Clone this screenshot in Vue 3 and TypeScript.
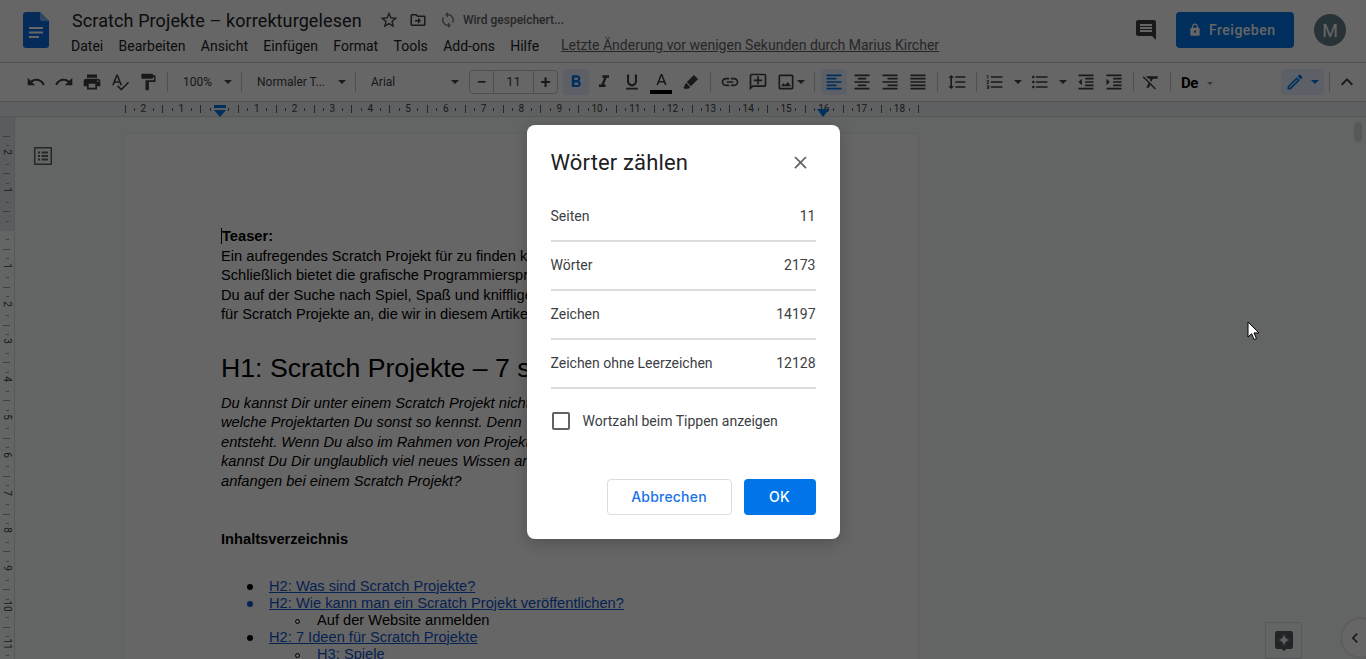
<script setup lang="ts">
interface ToolItem {
    kind: 'icon' | 'sep' | 'arrow' | 'select' | 'size' | 'style';
    d?: string;
    label?: string;
    width?: number;
    active?: boolean;
    // small nudge to the left edge, the real toolbar is not evenly spaced
    ml?: number;
}

const icons = {
    undo: 'M12.5 8c-2.65 0-5.05.99-6.9 2.6L2 7v9h9l-3.62-3.62c1.39-1.16 3.16-1.88 5.12-1.88 3.54 0 6.55 2.31 7.6 5.5l2.37-.78C21.08 11.03 17.15 8 12.5 8z',
    redo: 'M18.4 10.6C16.55 8.99 14.15 8 11.5 8c-4.65 0-8.58 3.03-9.96 7.22L3.9 16c1.05-3.19 4.05-5.5 7.6-5.5 1.95 0 3.73.72 5.12 1.88L13 16h9V7l-3.6 3.6z',
    print: 'M19 8H5c-1.66 0-3 1.34-3 3v6h4v4h12v-4h4v-6c0-1.66-1.34-3-3-3zm-3 11H8v-5h8v5zm3-7c-.55 0-1-.45-1-1s.45-1 1-1 1 .45 1 1-.45 1-1 1zm-1-9H6v4h12V3z',
    spell: 'M12.45 16h2.09L9.43 3H7.57L2.46 16h2.09l1.12-3h5.64l1.14 3zm-6.02-5L8.5 5.48 10.57 11H6.43zm15.16.59l-8.09 8.09L9.83 16l-1.41 1.41 5.09 5.09L23 13l-1.41-1.41z',
    paint: 'M18 4V3c0-.55-.45-1-1-1H5c-.55 0-1 .45-1 1v4c0 .55.45 1 1 1h12c.55 0 1-.45 1-1V6h1v4H9v11c0 .55.45 1 1 1h2c.55 0 1-.45 1-1v-9h8V4h-3z',
    bold: 'M15.6 10.79c.97-.67 1.65-1.77 1.65-2.79 0-2.26-1.75-4-4-4H7v14h7.04c2.09 0 3.71-1.7 3.71-3.79 0-1.52-.86-2.82-2.15-3.42zM10 6.5h3c.83 0 1.5.67 1.5 1.5s-.67 1.5-1.5 1.5h-3v-3zm3.5 9H10v-3h3.5c.83 0 1.5.67 1.5 1.5s-.67 1.5-1.5 1.5z',
    italic: 'M10 4v3h2.21l-3.42 8H6v3h8v-3h-2.21l3.42-8H18V4z',
    underline: 'M12 17c3.31 0 6-2.69 6-6V3h-2.5v8c0 1.93-1.57 3.5-3.5 3.5S8.5 12.93 8.5 11V3H6v8c0 3.31 2.69 6 6 6zm-7 2v2h14v-2H5z',
    marker: 'M15.5 3.5l5 5-8.5 8.5-5-5zM6 13l5 5-2 2H4l-1-1z',
    link: 'M3.9 12c0-1.71 1.39-3.1 3.1-3.1h4V7H7c-2.76 0-5 2.24-5 5s2.24 5 5 5h4v-1.9H7c-1.71 0-3.1-1.39-3.1-3.1zM8 13h8v-2H8v2zm9-6h-4v1.9h4c1.71 0 3.1 1.39 3.1 3.1s-1.39 3.1-3.1 3.1h-4V17h4c2.76 0 5-2.24 5-5s-2.24-5-5-5z',
    addComment: 'M20 2H4c-1.1 0-2 .9-2 2v18l4-4h14c1.1 0 2-.9 2-2V4c0-1.1-.9-2-2-2zm0 14H5.17L4 17.17V4h16v12zM11 5h2v4h4v2h-4v4h-2v-4H7V9h4V5z',
    image: 'M19 5v14H5V5h14m0-2H5c-1.1 0-2 .9-2 2v14c0 1.1.9 2 2 2h14c1.1 0 2-.9 2-2V5c0-1.1-.9-2-2-2zm-4.86 8.86l-3 3.87L9 13.14 6 17h12l-3.86-5.14z',
    left: 'M15 15H3v2h12v-2zm0-8H3v2h12V7zM3 13h18v-2H3v2zm0 8h18v-2H3v2zM3 3v2h18V3H3z',
    center: 'M7 15v2h10v-2H7zm-4 6h18v-2H3v2zm0-8h18v-2H3v2zm4-6v2h10V7H7zM3 3v2h18V3H3z',
    right: 'M3 21h18v-2H3v2zm6-4h12v-2H9v2zm-6-4h18v-2H3v2zm6-4h12V7H9v2zM3 3v2h18V3H3z',
    justify: 'M3 21h18v-2H3v2zm0-4h18v-2H3v2zm0-4h18v-2H3v2zm0-4h18V7H3v2zm0-6v2h18V3H3z',
    spacing: 'M6 7h2.5L5 3.5 1.5 7H4v10H1.5L5 20.5 8.5 17H6V7zm4-2v2h12V5H10zm0 14h12v-2H10v2zm0-6h12v-2H10v2z',
    numbered: 'M2 17h2v.5H3v1h1v.5H2v1h3v-4H2v1zm1-9h1V4H2v1h1v3zm-1 3h1.8L2 13.1v.9h3v-1H3.2L5 10.9V10H2v1zm5-6v2h14V5H7zm0 14h14v-2H7v2zm0-6h14v-2H7v2z',
    bullets: 'M4 10.5c-.83 0-1.5.67-1.5 1.5s.67 1.5 1.5 1.5 1.5-.67 1.5-1.5-.67-1.5-1.5-1.5zm0-6c-.83 0-1.5.67-1.5 1.5S3.17 7.5 4 7.5 5.5 6.83 5.5 6 4.83 4.5 4 4.5zm0 12c-.83 0-1.5.68-1.5 1.5s.68 1.5 1.5 1.5 1.5-.68 1.5-1.5-.67-1.5-1.5-1.5zM7 19h14v-2H7v2zm0-6h14v-2H7v2zm0-8v2h14V5H7z',
    outdent: 'M11 17h10v-2H11v2zm-8-5l4 4V8l-4 4zm0 9h18v-2H3v2zM3 3v2h18V3H3zm8 6h10V7H11v2zm0 4h10v-2H11v2z',
    indent: 'M3 21h18v-2H3v2zM3 8v8l4-4-4-4zm8 9h10v-2H11v2zM3 3v2h18V3H3zm8 6h10V7H11v2zm0 4h10v-2H11v2z',
    clear: 'M3.27 5L2 6.27l6.97 6.97L6.5 19h3l1.57-3.66L16.73 21 18 19.73 3.55 5.27 3.27 5zM6 5v.18L8.82 8h2.4l-.72 1.68 2.1 2.1L14.21 8H20V5H6z',
};

const pencil = 'M14.06 9.02l.92.92L5.92 19H5v-.92l9.06-9.06M17.66 3c-.25 0-.51.1-.7.29l-1.83 1.83 3.75 3.75 1.83-1.83c.39-.39.39-1.02 0-1.41l-2.34-2.34c-.2-.2-.45-.29-.71-.29zm-3.6 3.19L3 17.25V21h3.75L17.81 9.94l-3.75-3.75z';

const toolbar: ToolItem[] = [
    { kind: 'icon', d: icons.undo },
    { kind: 'icon', d: icons.redo },
    { kind: 'icon', d: icons.print },
    { kind: 'icon', d: icons.spell },
    { kind: 'icon', d: icons.paint },
    { kind: 'sep' },
    { kind: 'select', label: '100%', width: 63 },
    { kind: 'sep' },
    { kind: 'select', label: 'Normaler T...', width: 103 },
    { kind: 'sep' },
    { kind: 'select', label: 'Arial', width: 102 },
    { kind: 'size' },
    { kind: 'icon', d: icons.bold, active: true },
    { kind: 'icon', d: icons.italic },
    { kind: 'icon', d: icons.underline },
    { kind: 'style' },
    { kind: 'icon', d: icons.marker, ml: 1 },
    { kind: 'sep' },
    { kind: 'icon', d: icons.link },
    { kind: 'icon', d: icons.addComment },
    { kind: 'icon', d: icons.image },
    { kind: 'arrow', ml: -7, width: 16 },
    { kind: 'sep' },
    { kind: 'icon', d: icons.left, active: true },
    { kind: 'icon', d: icons.center },
    { kind: 'icon', d: icons.right },
    { kind: 'icon', d: icons.justify },
    { kind: 'sep' },
    { kind: 'icon', d: icons.spacing },
    { kind: 'sep' },
    { kind: 'icon', d: icons.numbered, ml: -1 },
    { kind: 'arrow', ml: 1.5 },
    { kind: 'icon', d: icons.bullets },
    { kind: 'arrow', ml: 2 },
    { kind: 'icon', d: icons.outdent, ml: 1.5 },
    { kind: 'icon', d: icons.indent },
    { kind: 'sep' },
    { kind: 'icon', d: icons.clear, ml: -2 },
    { kind: 'sep' },
];

const menus = ['Datei', 'Bearbeiten', 'Ansicht', 'Einfügen', 'Format', 'Tools', 'Add-ons', 'Hilfe'];

const stats = [
    { label: 'Seiten', value: '11' },
    { label: 'Wörter', value: '2173' },
    { label: 'Zeichen', value: '14197' },
    { label: 'Zeichen ohne Leerzeichen', value: '12128' },
];

const unit = 37.8;

// ruler marks sit every quarter unit, numbers on the whole units
const hMarks: { x: number; tall: boolean }[] = [];
const hNums: { x: number; n: number }[] = [];
for (let i = -10; i <= 74; i++) {
    const v = i / 4;
    const x = 219 + v * unit;
    if (i % 4 === 0) {
        if (i !== 0) hNums.push({ x, n: Math.abs(v) });
    } else {
        hMarks.push({ x, tall: i % 2 === 0 });
    }
}

const vMarks: { y: number; tall: boolean }[] = [];
const vNums: { y: number; n: number }[] = [];
for (let i = -10; i <= 46; i++) {
    const v = i / 4;
    const y = 113 + v * unit;
    if (i % 4 === 0) {
        if (i !== 0) vNums.push({ y, n: Math.abs(v) });
    } else {
        vMarks.push({ y, tall: i % 2 === 0 });
    }
}
</script>

<template>
    <div class="app">
        <header class="topbar">
            <svg class="logo" viewBox="0 0 26 36" width="26" height="36">
                <path d="M3 0h14l9 9v24a3 3 0 0 1-3 3H3a3 3 0 0 1-3-3V3a3 3 0 0 1 3-3z" fill="#0d6de0" />
                <path d="M17 0l9 9h-6.500a2.500 2.500 0 0 1-2.500-2.500z" fill="#7ab0f2" />
                <path d="M6 15h14v2H6zM6 19.500h14v2H6zM6 24h10v2H6z" fill="#fff" />
            </svg>
            <div class="title-block">
                <div class="title-row">
                    <span class="doc-title">Scratch Projekte – korrekturgelesen</span>
                    <svg class="ti star" viewBox="0 0 24 24"><path d="M22 9.240l-7.190-.620L12 2 9.190 8.630 2 9.240l5.460 4.730L5.820 21 12 17.270 18.180 21l-1.630-7.030L22 9.240zM12 15.400l-3.760 2.270 1-4.280-3.320-2.880 4.380-.380L12 6.100l1.710 4.040 4.380.380-3.320 2.880 1 4.280L12 15.400z" /></svg>
                    <svg class="ti folder" viewBox="0 0 24 24"><path d="M20 6h-8l-2-2H4c-1.100 0-2 .9-2 2v12c0 1.100.9 2 2 2h16c1.100 0 2-.9 2-2V8c0-1.100-.9-2-2-2zm0 12H4V6h5.170l2 2H20v10zm-8-1l4-4-4-4v3H8v2h4v3z" /></svg>
                    <svg class="ti sync" viewBox="0 0 24 24"><path d="M12 4V1L8 5l4 4V6c3.310 0 6 2.690 6 6 0 1.010-.25 1.970-.7 2.800l1.460 1.460C19.540 15.030 20 13.570 20 12c0-4.420-3.580-8-8-8zm0 14c-3.310 0-6-2.690-6-6 0-1.010.25-1.970.7-2.800L5.240 7.740C4.460 8.970 4 10.430 4 12c0 4.420 3.580 8 8 8v3l4-4-4-4v3z" /></svg>
                    <span class="saving">Wird gespeichert...</span>
                </div>
                <div class="menu-row">
                    <span v-for="m in menus" :key="m" class="menu-item">{{ m }}</span>
                    <a class="last-edit">Letzte Änderung vor wenigen Sekunden durch Marius Kircher</a>
                </div>
            </div>
            <div class="actions">
                <svg class="chat" viewBox="0 0 24 24" width="24" height="24"><path d="M21.990 4c0-1.100-.89-2-1.990-2H4c-1.100 0-2 .9-2 2v12c0 1.100.9 2 2 2h14l4 4-.01-18zM18 14H6v-2h12v2zm0-3H6V9h12v2zm0-3H6V6h12v2z" /></svg>
                <button class="share">
                    <svg viewBox="0 0 24 24" width="14" height="14"><path d="M18 8h-1V6c0-2.760-2.240-5-5-5S7 3.240 7 6v2H6c-1.100 0-2 .9-2 2v10c0 1.100.9 2 2 2h12c1.100 0 2-.9 2-2V10c0-1.100-.9-2-2-2zm-6 9c-1.100 0-2-.9-2-2s.9-2 2-2 2 .9 2 2-.9 2-2 2zm3.100-9H8.900V6c0-1.710 1.390-3.100 3.100-3.100 1.710 0 3.100 1.390 3.100 3.100v2z" /></svg>
                    Freigeben
                </button>
                <div class="avatar">M</div>
            </div>
        </header>

        <div class="toolbar">
            <template v-for="(item, i) in toolbar" :key="i">
                <span v-if="item.kind === 'sep'" class="sep"></span>
                <button v-else-if="item.kind === 'icon'" class="tool" :class="{ active: item.active }" :style="{ marginLeft: (item.ml ?? 0) + 'px' }">
                    <svg viewBox="0 0 24 24" width="20" height="20"><path :d="item.d" /></svg>
                </button>
                <span v-else-if="item.kind === 'arrow'" class="arrow-slot" :style="{ marginLeft: (item.ml ?? 0) + 'px', width: (item.width ?? 15) + 'px' }"><i class="arrow"></i></span>
                <div v-else-if="item.kind === 'select'" class="select" :style="{ width: item.width + 'px' }">
                    <span>{{ item.label }}</span><i class="arrow"></i>
                </div>
                <div v-else-if="item.kind === 'size'" class="size-box">
                    <span class="size-btn">−</span>
                    <span class="size-val">11</span>
                    <span class="size-btn">+</span>
                </div>
                <button v-else class="tool wide">
                    <span class="color-a">
                        <svg viewBox="0 0 24 20" width="19" height="16"><path d="M11 1L5.500 15h2.250l1.120-3h6.250l1.120 3h2.250L13 1h-2zm-1.380 9L12 3.670 14.380 10H9.620z" /></svg>
                        <i class="color-bar"></i>
                    </span>
                </button>
            </template>
            <div class="de"><b>De</b><i class="arrow small"></i></div>
            <div class="tool-right">
                <div class="mode">
                    <svg viewBox="0 0 24 24" width="20" height="20"><path :d="pencil" /></svg>
                    <i class="arrow blue"></i>
                </div>
                <span class="sep"></span>
                <svg class="collapse" viewBox="0 0 24 24" width="24" height="24"><path d="M7.410 15.410L12 10.830l4.590 4.580L18 14l-6-6-6 6z" /></svg>
            </div>
        </div>

        <div class="h-ruler">
            <i v-for="m in hMarks" :key="m.x" class="h-mark" :class="{ tall: m.tall }" :style="{ left: m.x + 'px' }"></i>
            <span v-for="n in hNums" :key="n.x" class="h-num" :style="{ left: n.x + 'px' }">{{ n.n }}</span>
            <svg class="indent-mark" viewBox="0 0 14 12" width="14" height="12"><path d="M1 0h12v3H1zM1 5h12l-6 7z" /></svg>
            <svg class="end-mark" viewBox="0 0 14 8" width="14" height="8"><path d="M1 0h12l-6 8z" /></svg>
        </div>

        <div class="workspace">
            <div class="v-ruler">
                <div class="v-margin"></div>
                <i v-for="m in vMarks" :key="m.y" class="v-mark" :class="{ tall: m.tall }" :style="{ top: m.y + 'px' }"></i>
                <span v-for="n in vNums" :key="n.y" class="v-num" :style="{ top: n.y + 'px' }">{{ n.n }}</span>
            </div>
            <svg class="outline" viewBox="0 0 18 18" width="18" height="18">
                <path d="M1 0h16a1 1 0 0 1 1 1v16a1 1 0 0 1-1 1H1a1 1 0 0 1-1-1V1a1 1 0 0 1 1-1zm.5 1.500v15h15v-15zM4 4.500h2v2H4zm3.500 0H14v2H7.500zM4 8h2v2H4zm3.500 0H14v2H7.500zM4 11.500h2v2H4zm3.500 0H14v2H7.500z" />
            </svg>
            <main class="page">
                <p class="para"><b class="caret-line">Teaser:</b></p>
                <p class="para">Ein aufregendes Scratch Projekt für zu finden kann</p>
                <p class="para">Schließlich bietet die grafische Programmiersprache</p>
                <p class="para">Du auf der Suche nach Spiel, Spaß und kniffligen</p>
                <p class="para">für Scratch Projekte an, die wir in diesem Artikel</p>
                <h1 class="h1">H1: Scratch Projekte – 7 spannende</h1>
                <div class="intro">
                    <p class="para">Du kannst Dir unter einem Scratch Projekt nichts</p>
                    <p class="para">welche Projektarten Du sonst so kennst. Denn</p>
                    <p class="para">entsteht. Wenn Du also im Rahmen von Projekten</p>
                    <p class="para">kannst Du Dir unglaublich viel neues Wissen an</p>
                    <p class="para">anfangen bei einem Scratch Projekt?</p>
                </div>
                <p class="para toc-title"><b>Inhaltsverzeichnis</b></p>
                <ul class="toc">
                    <li><a>H2: Was sind Scratch Projekte?</a></li>
                    <li class="blue-dot"><a>H2: Wie kann man ein Scratch Projekt veröffentlichen?</a>
                        <ul><li>Auf der Website anmelden</li></ul>
                    </li>
                    <li><a>H2: 7 Ideen für Scratch Projekte</a>
                        <ul><li><a>H3: Spiele</a></li></ul>
                    </li>
                </ul>
            </main>
            <div class="scroll-thumb"></div>
            <div class="explore">
                <svg viewBox="0 0 18 20" width="18" height="20">
                    <path d="M2 0h14a2 2 0 0 1 2 2v14a2 2 0 0 1-2 2h-4.500L9 20l-2.500-2H2a2 2 0 0 1-2-2V2a2 2 0 0 1 2-2z" fill="#5a5c5f" />
                    <path d="M9 3c.6 3.400 2.100 5.100 5.500 6-3.400.9-4.900 2.600-5.500 6-.6-3.400-2.100-5.100-5.500-6 3.400-.9 4.900-2.600 5.500-6z" fill="#f1f3f4" />
                </svg>
            </div>
            <div class="side-toggle">
                <svg viewBox="0 0 24 24" width="20" height="20"><path d="M15.410 7.410L14 6l-6 6 6 6 1.410-1.410L10.830 12z" /></svg>
            </div>
        </div>

        <div class="overlay">
            <section class="dialog">
                <div class="dialog-head">
                    <h2>Wörter zählen</h2>
                    <svg class="close" viewBox="0 0 24 24" width="21" height="21"><path d="M19 6.410L17.590 5 12 10.590 6.410 5 5 6.410 10.590 12 5 17.590 6.410 19 12 13.410 17.590 19 19 17.590 13.410 12z" /></svg>
                </div>
                <div v-for="s in stats" :key="s.label" class="stat">
                    <span>{{ s.label }}</span>
                    <span>{{ s.value }}</span>
                </div>
                <label class="check">
                    <i class="box"></i>
                    <span>Wortzahl beim Tippen anzeigen</span>
                </label>
                <div class="buttons">
                    <button class="btn cancel">Abbrechen</button>
                    <button class="btn ok">OK</button>
                </div>
            </section>
        </div>

        <svg class="cursor" viewBox="0 0 14 20" width="14" height="20">
            <path d="M1 1v15l3.600-3.300 2.500 5.800 2.400-1-2.500-5.600H12z" fill="#fff" stroke="#000" stroke-width="1" />
        </svg>
    </div>
</template>

<style>
html,
body {
    margin: 0;
    overflow: hidden;
}
</style>

<style scoped>
.app {
    position: relative;
    width: 1366px;
    height: 659px;
    overflow: hidden;
    background: #fff;
    font-family: Roboto, "Liberation Sans", sans-serif;
    color: #3c4043;
}

.topbar {
    display: flex;
    height: 62px;
    border-bottom: 1px solid #c4c7c5;
    box-sizing: content-box;
    padding-left: 23px;
}
.logo {
    margin-top: 12px;
    flex: none;
}
.title-block {
    margin-left: 22px;
    padding-top: 8px;
}
.title-row {
    display: flex;
    align-items: center;
    height: 24px;
}
.doc-title {
    font-size: 18px;
    color: #202124;
    letter-spacing: 0.1px;
    margin-left: 1px;
    width: 299px;
}
.ti {
    width: 20px;
    height: 20px;
    fill: #3c4043;
    flex: none;
}
.star {
    margin-left: 8px;
}
.folder {
    margin-left: 10px;
    width: 18px;
    height: 18px;
}
.sync {
    margin-left: 12px;
    width: 18px;
    height: 18px;
    fill: #80868b;
}
.saving {
    margin-left: 6px;
    font-size: 12px;
    color: #5f6368;
    font-weight: 500;
}
.menu-row {
    display: flex;
    align-items: center;
    height: 22px;
    margin-top: 3px;
    font-size: 14px;
}
.menu-item {
    margin-right: 15.350px;
    color: #202124;
}
.last-edit {
    margin-left: 6.500px;
    margin-bottom: 2px;
    color: #5f6368;
    text-decoration: underline;
}

.actions {
    margin-left: auto;
    display: flex;
    align-items: center;
    padding-right: 20px;
    height: 60px;
}
.chat {
    fill: #3c4043;
    margin-right: 18px;
}
.share {
    display: flex;
    align-items: center;
    gap: 7px;
    width: 118px;
    height: 36px;
    padding: 0 0 0 12px;
    border: 0;
    border-radius: 4px;
    background: #0075e9;
    color: #fff;
    font: 500 14px Roboto, sans-serif;
    letter-spacing: 0.5px;
}
.share svg {
    fill: #fff;
}
.avatar {
    width: 32px;
    height: 32px;
    margin-left: 20px;
    border-radius: 50%;
    background: #64808c;
    color: #fff;
    font-size: 18px;
    display: flex;
    align-items: center;
    justify-content: center;
}

.toolbar {
    display: flex;
    align-items: center;
    height: 38px;
    padding-left: 22px;
    background: #fff;
    border-bottom: 1px solid #d0d3d6;
}
.sep {
    width: 1px;
    height: 20px;
    margin: 0 5px;
    background: #c4c7c5;
    flex: none;
}
.tool {
    width: 28px;
    height: 26px;
    padding: 0;
    border: 0;
    border-left: 1px solid transparent;
    border-right: 1px solid transparent;
    background: transparent;
    background-clip: padding-box;
    border-radius: 3px;
    display: flex;
    align-items: center;
    justify-content: center;
    flex: none;
}
.tool.wide {
    width: 30px;
}
.tool svg {
    fill: #3c4043;
}
.tool.active {
    background-color: #e8f0fe;
}
.tool.active svg {
    fill: #0075e9;
}
.arrow {
    display: block;
    width: 0;
    height: 0;
    border-left: 4px solid transparent;
    border-right: 4px solid transparent;
    border-top: 4px solid #444746;
}
.arrow.small {
    border-left-width: 3px;
    border-right-width: 3px;
    border-top-width: 3px;
    border-top-color: #80868b;
}
.arrow.blue {
    border-top-color: #0075e9;
}
.arrow-slot {
    display: flex;
    justify-content: center;
    flex: none;
}
.select {
    display: flex;
    align-items: center;
    justify-content: space-between;
    box-sizing: border-box;
    padding: 0 4px 0 10px;
    font-size: 12px;
    color: #3c4043;
    flex: none;
}
.size-box {
    display: flex;
    align-items: center;
    height: 24px;
    width: 89px;
    margin: 0 4px 0 6px;
    border: 1px solid #c4c7c5;
    border-radius: 4px;
    box-sizing: border-box;
    flex: none;
    font-size: 13px;
}
.size-btn {
    width: 23px;
    text-align: center;
    font-size: 18px;
    font-weight: 500;
    line-height: 22px;
}
.size-val {
    flex: 1;
    text-align: center;
    border-left: 1px solid #c4c7c5;
    border-right: 1px solid #c4c7c5;
    line-height: 22px;
}
.color-a {
    display: flex;
    flex-direction: column;
    align-items: center;
    width: 22px;
    margin-top: 3px;
}
.color-a svg {
    margin-bottom: 1px;
}
.color-bar {
    display: block;
    width: 22px;
    height: 4px;
    background: #000;
}
.de {
    display: flex;
    align-items: center;
    gap: 9px;
    margin-left: 5px;
    padding-top: 2px;
    font-family: Roboto, sans-serif;
    font-size: 15px;
    color: #000;
    letter-spacing: -0.5px;
}
.tool-right {
    margin-left: auto;
    display: flex;
    align-items: center;
    padding-right: 7px;
}
.mode {
    display: flex;
    align-items: center;
    gap: 6px;
    width: 43px;
    height: 26px;
    box-sizing: border-box;
    padding-left: 4px;
    background: #e8f0fe;
    border-radius: 4px;
}
.mode svg {
    fill: #0075e9;
}
.collapse {
    fill: #3c4043;
}

.h-ruler {
    position: relative;
    height: 14px;
    background: #edf0f2;
    border-bottom: 1px solid #d8dadd;
    font-size: 10px;
}
.h-mark {
    position: absolute;
    top: 6px;
    width: 1px;
    height: 3px;
    background: #5f6368;
}
.h-mark.tall {
    top: 3px;
    height: 8px;
}
.h-num {
    position: absolute;
    top: 1px;
    transform: translateX(-50%);
    line-height: 12px;
    color: #3c4043;
}
.indent-mark {
    position: absolute;
    left: 213px;
    top: 3px;
    fill: #0075e9;
}
.end-mark {
    position: absolute;
    left: 816px;
    top: 7px;
    fill: #0075e9;
}

.workspace {
    position: relative;
    height: 544px;
    background: #f8f9fa;
    overflow: hidden;
}
.v-ruler {
    position: absolute;
    left: 0;
    top: 0;
    bottom: 0;
    width: 14px;
    background: #f8f9fa;
    border-right: 1px solid #dadce0;
    font-size: 10px;
}
.v-margin {
    height: 114px;
    background: #e3e5e8;
}
.v-mark {
    position: absolute;
    left: 6px;
    width: 3px;
    height: 1px;
    background: #9aa0a6;
}
.v-mark.tall {
    left: 3px;
    width: 7px;
}
.v-num {
    position: absolute;
    left: 0;
    width: 14px;
    text-align: center;
    line-height: 14px;
    margin-top: -9px;
    transform: rotate(90deg);
    color: #3c4043;
}
.outline {
    position: absolute;
    left: 34px;
    top: 30px;
    fill: #5f6368;
}
.page {
    position: absolute;
    left: 125px;
    top: 17px;
    width: 793px;
    height: 700px;
    box-sizing: border-box;
    padding: 93px 96px 0;
    background: #fff;
    box-shadow: 0 0 2px rgba(0, 0, 0, 0.12);
    font-family: "Liberation Sans", Arial, sans-serif;
    font-size: 14.67px;
    color: #000;
}
.para {
    margin: 0;
    line-height: 19.500px;
    white-space: nowrap;
}
.caret-line {
    border-left: 1px solid #000;
}
.h1 {
    margin: 23px 0 0;
    font-size: 26.670px;
    font-weight: 400;
    line-height: 40px;
    white-space: nowrap;
}
.intro {
    margin-top: 6px;
    font-style: italic;
}
.toc-title {
    margin-top: 38.500px;
}
.toc {
    margin: 28.500px 0 0;
    padding-left: 48px;
    line-height: 17px;
    list-style: none;
}
.toc ul {
    margin: 0;
    padding-left: 48px;
    list-style: none;
}
.toc li {
    position: relative;
}
.toc li::before {
    content: "";
    position: absolute;
    left: -22px;
    top: 6px;
    width: 6px;
    height: 6px;
    border-radius: 50%;
    background: #000;
}
.toc li.blue-dot::before {
    background: #1155cc;
}
.toc ul li::before {
    left: -22px;
    top: 7px;
    width: 5px;
    height: 5px;
    box-sizing: border-box;
    background: transparent;
    border: 1px solid #000;
}
.toc a {
    color: #1155cc;
    text-decoration: underline;
}
.scroll-thumb {
    position: absolute;
    right: 4px;
    top: 5px;
    width: 8px;
    height: 20px;
    border-radius: 4px;
    background: #d9dbdc;
}
.explore {
    position: absolute;
    left: 1265px;
    top: 505px;
    width: 37px;
    height: 37px;
    box-sizing: border-box;
    border: 1px solid #dadce0;
    border-radius: 2px;
    display: flex;
    align-items: center;
    justify-content: center;
    background: #f8f9fa;
}
.side-toggle {
    position: absolute;
    left: 1342px;
    top: 502px;
    width: 38px;
    height: 38px;
    box-sizing: border-box;
    padding: 9px 0 0 3px;
    border-radius: 50%;
    background: #fff;
    box-shadow: 0 0 3px rgba(0, 0, 0, 0.25);
}
.side-toggle svg {
    fill: #3c4043;
}

.overlay {
    position: absolute;
    inset: 0;
    display: flex;
    justify-content: center;
    align-items: flex-start;
    padding-top: 125px;
    box-sizing: border-box;
    background: rgba(0, 0, 0, 0.6);
}
.dialog {
    width: 313px;
    height: 414px;
    box-sizing: border-box;
    padding: 24px;
    background: #fff;
    border-radius: 8px;
    box-shadow: 0 4px 16px rgba(0, 0, 0, 0.2);
}
.dialog-head {
    display: flex;
    justify-content: space-between;
    align-items: center;
    height: 28px;
    margin: -1px 0 17px;
}
.dialog-head h2 {
    margin: 0;
    font-family: Roboto, sans-serif;
    font-size: 22px;
    font-weight: 400;
    letter-spacing: 0.15px;
    color: #202124;
}
.close {
    margin-right: 5px;
    fill: #5f6368;
    flex: none;
}
.stat {
    display: flex;
    justify-content: space-between;
    align-items: center;
    padding-bottom: 2px;
    box-sizing: border-box;
    border-bottom: 2px solid #dadce0;
    height: 49px;
    font-size: 14px;
    color: #3c4043;
}
.check {
    display: flex;
    align-items: center;
    margin-top: 23px;
    height: 18px;
    font-size: 14px;
}
.box {
    width: 18px;
    height: 18px;
    margin: 0 13px 0 1px;
    box-sizing: border-box;
    border: 2px solid #5f6368;
    border-radius: 2px;
}
.buttons {
    display: flex;
    justify-content: flex-end;
    gap: 12px;
    margin-top: 49px;
}
.btn {
    height: 36px;
    padding: 0 0 2px;
    border-radius: 4px;
    font: 500 14px Inter, Roboto, sans-serif;
    letter-spacing: 0.2px;
}
.cancel {
    width: 125px;
    background: #fff;
    border: 1px solid #dadce0;
    color: #1a73e8;
}
.ok {
    width: 72px;
    border: 0;
    background: #0075e9;
    color: #fff;
}
.cursor {
    position: absolute;
    left: 1247px;
    top: 321px;
}
</style>
